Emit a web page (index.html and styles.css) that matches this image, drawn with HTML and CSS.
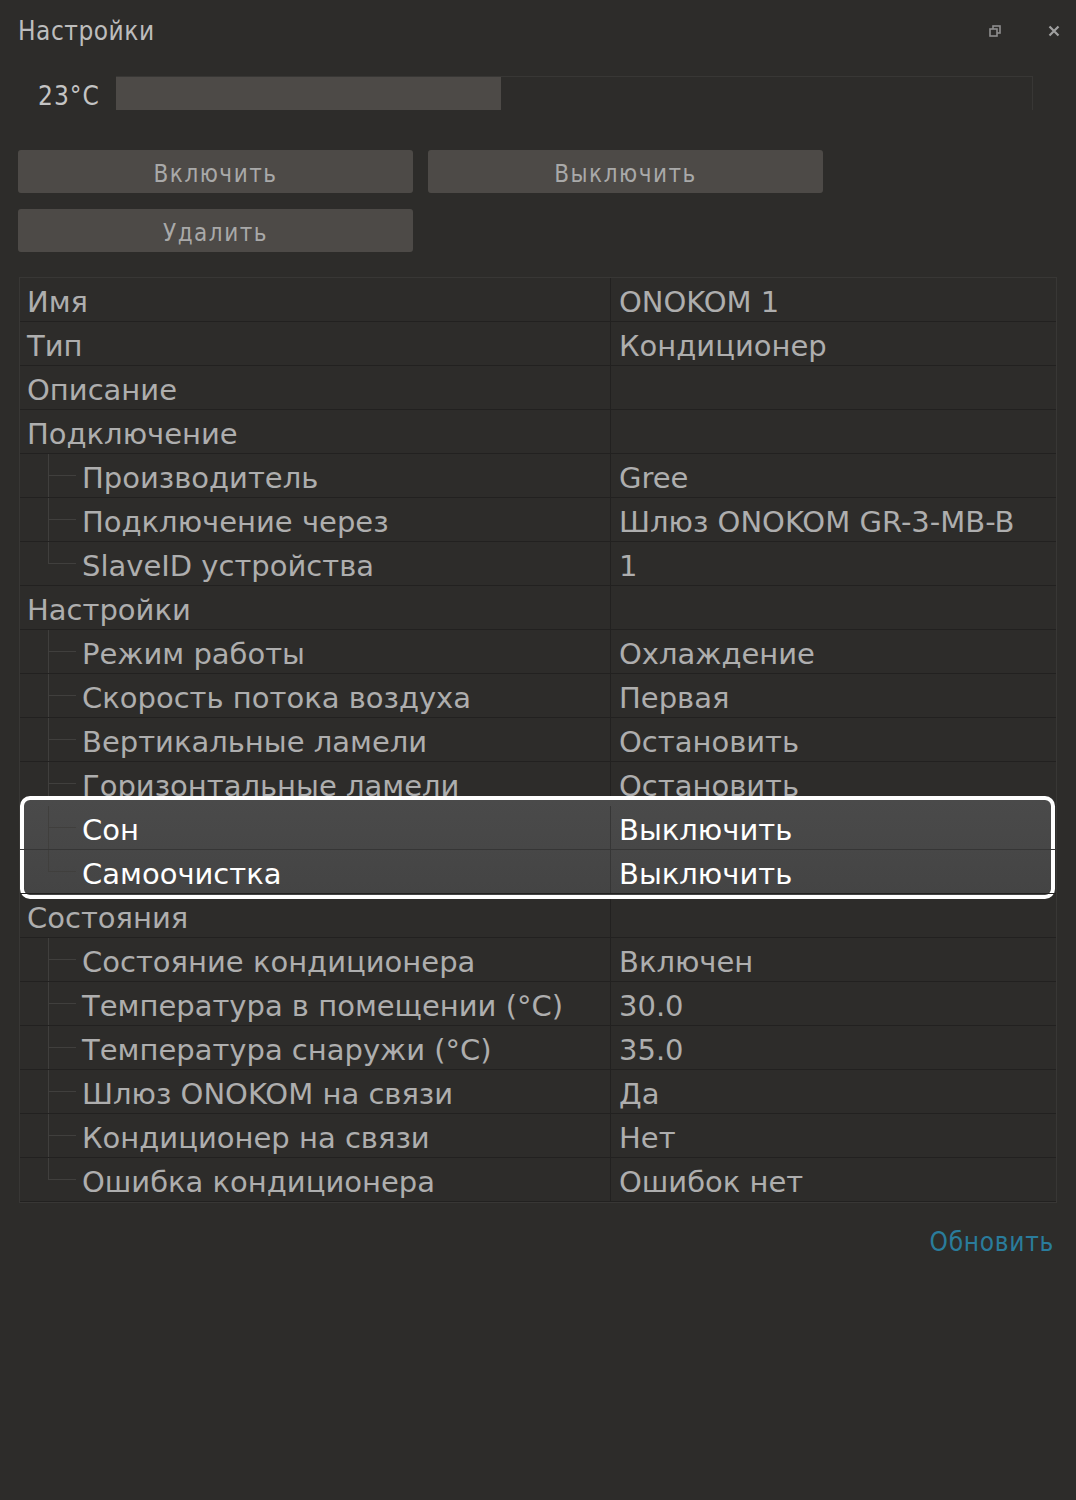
FILE: index.html
```html
<!DOCTYPE html>
<html lang="ru">
<head>
    <meta charset="UTF-8">
    <title>Настройки</title>
    <link rel="stylesheet" href="styles.css">
</head>
<body>
    <div class="panel">
        <div class="panel-head">
            <span class="panel-title">Настройки</span>
            <div class="panel-tools">
                <svg class="tool" width="14" height="14" viewBox="0 0 14 14">
                    <rect x="5" y="2" width="7" height="7" fill="none" stroke="#8e8e8e" stroke-width="1.6"/>
                    <rect x="2" y="5" width="7" height="7" fill="#2d2c2a" stroke="#8e8e8e" stroke-width="1.6"/>
                </svg>
                <svg class="tool" width="14" height="14" viewBox="0 0 14 14">
                    <path d="M2.5 2.5 L11.5 11.5 M11.5 2.5 L2.5 11.5" stroke="#a0a0a0" stroke-width="2.2"/>
                </svg>
            </div>
        </div>

        <div class="temp-row">
            <span class="temp-label">23°C</span>
            <div class="temp-track">
                <div class="temp-fill" style="width: 42%"></div>
            </div>
        </div>

        <div class="actions">
            <button class="btn">Включить</button>
            <button class="btn">Выключить</button>
            <button class="btn">Удалить</button>
        </div>

        <div class="props">
            <div class="row"><div class="key">Имя</div><div class="val">ONOKOM 1</div></div>
            <div class="row"><div class="key">Тип</div><div class="val">Кондиционер</div></div>
            <div class="row"><div class="key">Описание</div><div class="val"></div></div>
            <div class="row"><div class="key">Подключение</div><div class="val"></div></div>
            <div class="row"><div class="key"><span class="branch"></span>Производитель</div><div class="val">Gree</div></div>
            <div class="row"><div class="key"><span class="branch"></span>Подключение через</div><div class="val">Шлюз ONOKOM GR-3-MB-B</div></div>
            <div class="row"><div class="key"><span class="branch last"></span>SlaveID устройства</div><div class="val">1</div></div>
            <div class="row"><div class="key">Настройки</div><div class="val"></div></div>
            <div class="row"><div class="key"><span class="branch"></span>Режим работы</div><div class="val">Охлаждение</div></div>
            <div class="row"><div class="key"><span class="branch"></span>Скорость потока воздуха</div><div class="val">Первая</div></div>
            <div class="row"><div class="key"><span class="branch"></span>Вертикальные ламели</div><div class="val">Остановить</div></div>
            <div class="row"><div class="key"><span class="branch"></span>Горизонтальные ламели</div><div class="val">Остановить</div></div>
            <div class="row hl"><div class="key"><span class="branch"></span>Сон</div><div class="val">Выключить</div></div>
            <div class="row hl"><div class="key"><span class="branch last"></span>Самоочистка</div><div class="val">Выключить</div></div>
            <div class="row"><div class="key">Состояния</div><div class="val"></div></div>
            <div class="row"><div class="key"><span class="branch"></span>Состояние кондиционера</div><div class="val">Включен</div></div>
            <div class="row"><div class="key"><span class="branch"></span>Температура в помещении (°C)</div><div class="val">30.0</div></div>
            <div class="row"><div class="key"><span class="branch"></span>Температура снаружи (°C)</div><div class="val">35.0</div></div>
            <div class="row"><div class="key"><span class="branch"></span>Шлюз ONOKOM на связи</div><div class="val">Да</div></div>
            <div class="row"><div class="key"><span class="branch"></span>Кондиционер на связи</div><div class="val">Нет</div></div>
            <div class="row"><div class="key"><span class="branch last"></span>Ошибка кондиционера</div><div class="val">Ошибок нет</div></div>

            <!-- рамка выделения поверх строк -->
            <div class="hl-frame"></div>
        </div>

        <div class="panel-foot">
            <a class="refresh" href="#">Обновить</a>
        </div>
    </div>
</body>
</html>
```

FILE: styles.css
```css
body {
    margin: 0;
    background: #2d2c2a;
    font-family: "Liberation Sans Narrow", "DejaVu Sans Condensed", "Liberation Sans", sans-serif;
    color: #b4b4b4;
}
.panel {
    padding: 0 19px 0 18px;
}
.panel-head {
    height: 62px;
    display: flex;
    align-items: center;
    justify-content: space-between;
}
.panel-title {
    font-size: 26px;
    letter-spacing: 0.5px;
    color: #bdbdbd;
}
.panel-tools {
    display: flex;
    align-items: center;
    gap: 45px;
    margin-right: -4px;
}
.temp-row {
    display: flex;
    align-items: stretch;
    height: 34px;
    margin-top: 14px;
    padding-left: 20px;
    margin-right: 24px;
}
.temp-label {
    width: 78px;
    font-size: 26px;
    letter-spacing: 1px;
    line-height: 40px;
    color: #c4c4c4;
}
.temp-track {
    flex: 1;
    border-top: 1px solid #383735;
    border-right: 1px solid #383735;
}
.temp-fill {
    height: 100%;
    background: #4d4a47;
}
.actions {
    display: grid;
    grid-template-columns: 395px 395px;
    column-gap: 15px;
    row-gap: 16px;
    margin-top: 40px;
}
.btn {
    height: 43px;
    border: none;
    border-radius: 3px;
    background: #4d4a47;
    color: #a9a9a9;
    font-family: inherit;
    font-size: 24px;
    letter-spacing: 1.5px;
    padding: 4px 0 0;
}
.props {
    position: relative;
    margin-top: 25px;
    margin-left: 1px;
    border: 1px solid #383735;
    font-family: "DejaVu Sans", "Liberation Sans", sans-serif;
    font-size: 29px;
    color: #aeaeae;
}
.row {
    display: grid;
    grid-template-columns: 591px 1fr;
    height: 43px;
    border-bottom: 1px solid #222120;
}
.row:last-of-type {
    border-bottom: none;
}
.key {
    display: flex;
    align-items: center;
    padding: 5px 0 0 7px;
    border-right: 1px solid #222120;
    white-space: nowrap;
}
.val {
    display: flex;
    align-items: center;
    padding: 5px 0 0 8px;
    white-space: nowrap;
}
.branch {
    align-self: stretch;
    width: 28px;
    margin: -5px 6px 0 21px;
    background:
        linear-gradient(#403f3d, #403f3d) no-repeat 0 0 / 1px 100%,
        linear-gradient(#403f3d, #403f3d) no-repeat 0 50% / 100% 1px;
}
.branch.last {
    background:
        linear-gradient(#403f3d, #403f3d) no-repeat 0 0 / 1px 50%,
        linear-gradient(#403f3d, #403f3d) no-repeat 0 50% / 100% 1px;
}
.row.hl {
    position: relative;
    z-index: 2;
    color: #ffffff;
}
.row.hl .key,
.row.hl .val {
    border-color: #363636;
}
.row.hl:nth-of-type(13) {
    border-bottom-color: #363636;
}
.hl-frame {
    position: absolute;
    z-index: 1;
    top: 518px;
    left: 0;
    width: 1035px;
    height: 103px;
    box-sizing: border-box;
    border: 4px solid #ffffff;
    border-radius: 10px;
    background: linear-gradient(#4a4a4a, #444444);
}
.panel-foot {
    display: flex;
    justify-content: flex-end;
    padding: 24px 3px 0 0;
}
.refresh {
    color: #2a7c9c;
    text-decoration: none;
    font-size: 26px;
    letter-spacing: 0.7px;
}
```
